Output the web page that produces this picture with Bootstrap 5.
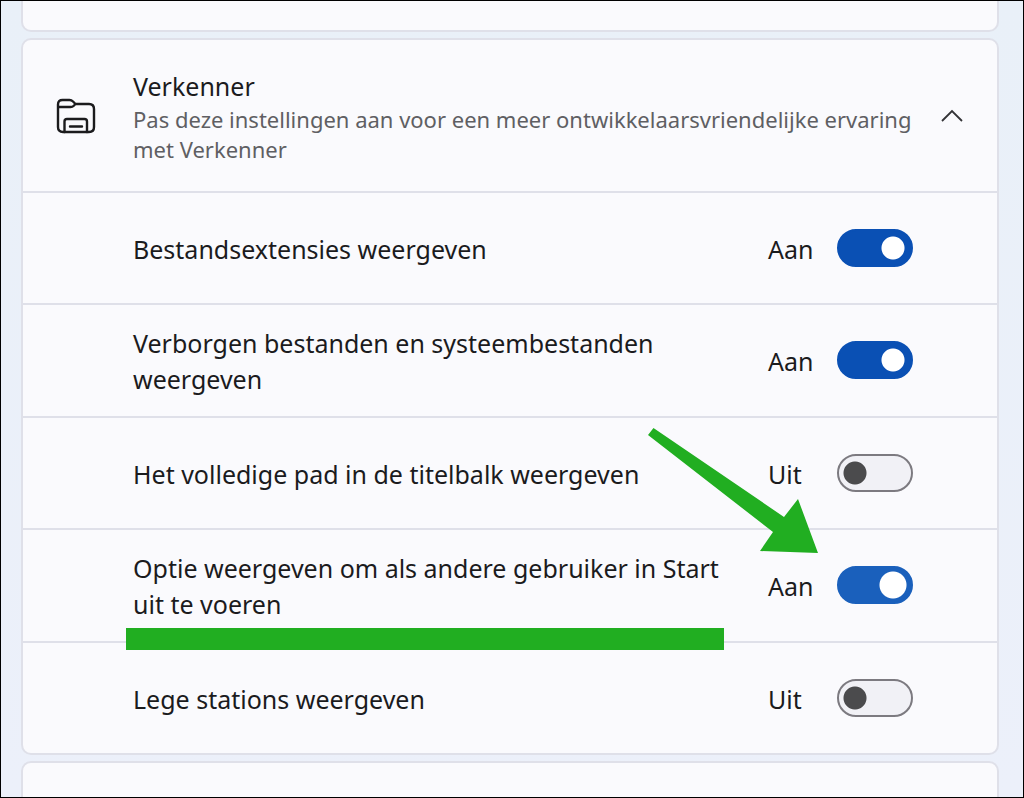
<!DOCTYPE html>
<html lang="nl">
<head>
<meta charset="utf-8">
<meta name="viewport" content="width=device-width, initial-scale=1">
<title>Verkenner</title>
<link href="https://cdn.jsdelivr.net/npm/bootstrap@5.3.0/dist/css/bootstrap.min.css" rel="stylesheet">
<style>
body { font-family: "Noto Sans", "Open Sans", sans-serif; font-size: 25px; line-height: 36px; color: #1b1b1d; background: #eaf0f9; }
.page-frame { gap: 6px; border: 1px solid #000; padding: 0 24px 0 20px; height: 100vh; overflow: hidden; background: linear-gradient(#e9f0f8, #ecf0fa); }
.panel { background: #fafafd; border: 2px solid #dfe0e9; border-radius: 10px; }
.panel-above { height: 31px; border-top: 0; border-top-left-radius: 0; border-top-right-radius: 0; }
.panel-below { height: 120px; }
.panel-head { min-height: 151px; padding: 0 33px; border: 0; background: none; color: inherit; }
.head-icon { width: 40px; margin-right: 37px; }
.head-title { font-size: 25px; line-height: 36px; }
.head-text { font-size: 22px; line-height: 30px; color: #5f5f63; }
.setting { min-height: 112px; padding: 20px 84px 19px 110px; border-top: 2px solid #dfe0e9; }
.setting-name { width: 635px; padding-right: 40px; }
.state { width: 69px; }
.form-switch .form-check-input.toggle { width: 76px; height: 38px; margin: 0 0 2px; border: 2px solid #7c7a80; background-color: #f1f1f6;
  background-image: radial-gradient(circle at 16px 17px, #4b4b4d 11px, transparent 12px); background-size: 100% 100%; background-position: left; }
.form-switch .form-check-input.toggle:checked { border-color: #0a50b4; background-color: #0a50b4;
  background-image: radial-gradient(circle at 54px 17px, #fff 11px, transparent 12px); }
.form-switch .form-check-input.toggle.hovered:checked { border-color: #1a60bc; background-color: #1a60bc;
  background-image: radial-gradient(circle at 54px 17px, #fff 13px, transparent 14px); }
.marker { left: -7px; right: 44px; top: 78px; height: 22px; background: #21ae21; }
.arrow { right: 95px; bottom: 52px; }
</style>
</head>
<body>
<main class="page-frame d-flex flex-column">
  <section class="panel panel-above flex-shrink-0"></section>
  <section class="panel flex-shrink-0">
    <button type="button" class="panel-head d-flex align-items-center w-100 text-start" aria-expanded="true" aria-controls="options">
      <svg class="head-icon flex-shrink-0" width="40" height="36" viewBox="0 0 40 36" fill="none" stroke="#1b1b1d" stroke-width="2.4" stroke-linejoin="round" aria-hidden="true">
        <path d="M2 9V6.500Q2 2 6.500 2H13.500Q15.500 2 17 3.500L19.500 6H33Q38 6 38 11V29Q38 34 33 34H7Q2 34 2 29V9H14.500Q16.500 9 17.500 8L19.500 6"/>
        <path d="M8.500 34V23.500Q8.500 21 11 21H28.500Q31 21 31 23.500V34M14 28.500H26" stroke-linecap="round"/>
      </svg>
      <span class="flex-grow-1">
        <span class="head-title d-block">Verkenner</span>
        <span class="head-text d-block">Pas deze instellingen aan voor een meer ontwikkelaarsvriendelijke ervaring met Verkenner</span>
      </span>
      <svg class="flex-shrink-0 ms-3" width="24" height="14" viewBox="0 0 24 14" fill="none" stroke="#333336" stroke-width="1.800" aria-hidden="true"><path d="M2 12L12 2L22 12"/></svg>
    </button>
    <div id="options">
      <div class="setting d-flex align-items-center">
        <label class="setting-name me-auto" for="ext">Bestandsextensies weergeven</label>
        <span class="state">Aan</span>
        <div class="form-check form-switch d-flex p-0 m-0"><input class="form-check-input toggle" type="checkbox" role="switch" id="ext" checked></div>
      </div>
      <div class="setting d-flex align-items-center">
        <label class="setting-name me-auto" for="hidden-files">Verborgen bestanden en systeembestanden weergeven</label>
        <span class="state">Aan</span>
        <div class="form-check form-switch d-flex p-0 m-0"><input class="form-check-input toggle" type="checkbox" role="switch" id="hidden-files" checked></div>
      </div>
      <div class="setting d-flex align-items-center">
        <label class="setting-name me-auto" for="full-path">Het volledige pad in de titelbalk weergeven</label>
        <span class="state">Uit</span>
        <div class="form-check form-switch d-flex p-0 m-0"><input class="form-check-input toggle" type="checkbox" role="switch" id="full-path"></div>
      </div>
      <div class="setting d-flex align-items-center">
        <label class="setting-name me-auto position-relative" for="run-as">Optie weergeven om als andere gebruiker in Start uit te voeren<span class="marker position-absolute z-1"></span></label>
        <span class="state">Aan</span>
        <div class="form-check form-switch position-relative d-flex p-0 m-0"><input class="form-check-input toggle hovered" type="checkbox" role="switch" id="run-as" checked>
          <svg class="arrow position-absolute" width="170" height="126" viewBox="0 0 170 126" aria-hidden="true"><path d="M5.500 0L136 89L150 71L170 125L112 123L125 104L0 7Z" fill="#21ae21"/></svg>
        </div>
      </div>
      <div class="setting d-flex align-items-center">
        <label class="setting-name me-auto" for="empty-drives">Lege stations weergeven</label>
        <span class="state">Uit</span>
        <div class="form-check form-switch d-flex p-0 m-0"><input class="form-check-input toggle" type="checkbox" role="switch" id="empty-drives"></div>
      </div>
    </div>
  </section>
  <section class="panel panel-below flex-shrink-0"></section>
</main>
<script src="https://cdn.jsdelivr.net/npm/bootstrap@5.3.0/dist/js/bootstrap.bundle.min.js"></script>
</body>
</html>
